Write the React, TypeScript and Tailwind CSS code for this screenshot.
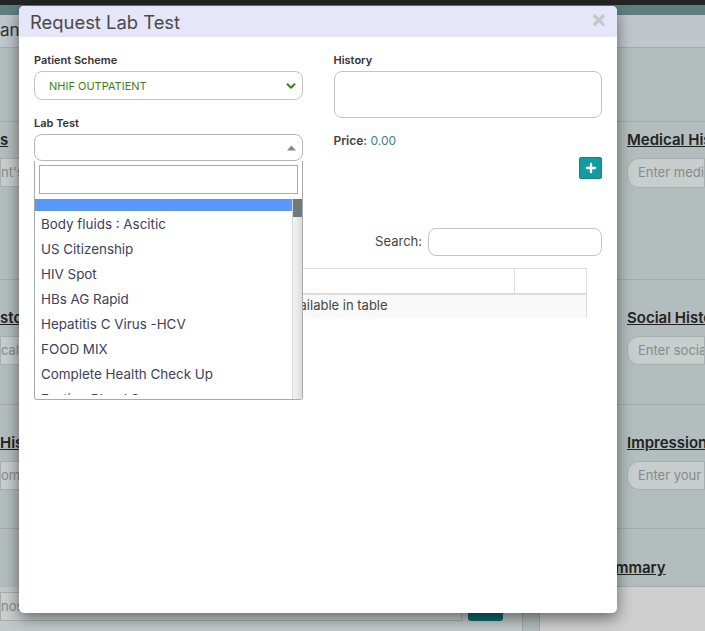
import { ChevronDown, Plus } from "lucide-react";

const labTests = [
  "Body fluids : Ascitic",
  "US Citizenship",
  "HIV Spot",
  "HBs AG Rapid",
  "Hepatitis C Virus -HCV",
  "FOOD MIX",
  "Complete Health Check Up",
  "Fasting Blood Sugar",
];

function BgHeading({ text, className = "" }: { text: string; className?: string }) {
  return (
    <p className={`text-[15px] leading-[20px] font-semibold text-[#222] underline whitespace-nowrap ${className}`}>
      {text}
    </p>
  );
}

function BgInput({ text, className = "" }: { text: string; className?: string }) {
  return (
    <div
      className={`h-[29px] bg-[#c8cdcd] border border-[#a6aeae] flex items-center text-[13px] text-[#858b8b] whitespace-nowrap overflow-hidden ${className}`}
    >
      {text}
    </div>
  );
}

// page behind the modal, only its edges show
function Page() {
  return (
    <div className="absolute inset-0 flex flex-col bg-[#b4bdbd]">
      <div className="h-[5px] bg-[#242424]" />
      <div className="h-[10px] bg-[#5f7f7f]" />
      <div className="h-[33px] bg-[#c1c6cc] border-b border-[#a3abab] flex items-center text-[17px] text-[#333]">
        ane
      </div>
      <div className="flex flex-1">
        {/* left column */}
        <div className="w-[523px] shrink-0 flex flex-col border-r border-[#a3abab]">
          <div className="h-[74px] border-b border-[#a3abab]" />
          <div className="h-[158px] border-b border-[#a3abab] pt-[8px]">
            <BgHeading text="s" />
            <BgInput text="nt's" className="mt-[8px] h-[22px] rounded-r-[10px]" />
          </div>
          <div className="h-[125px] border-b border-[#a3abab] pt-[28px]">
            <BgHeading text="stor" />
            <BgInput text="cal I" className="mt-[8px] rounded-r-[10px]" />
          </div>
          <div className="h-[124px] border-b border-[#a3abab] pt-[28px]">
            <BgHeading text="Hist" />
            <BgInput text="omi" className="mt-[8px] rounded-r-[10px]" />
          </div>
          <div className="h-[58px]" />
          <div className="flex-1 bg-[#c3c8c8] flex items-start pt-[5px] gap-[6px]">
            <BgInput text="nos" className="w-[462px] h-[26px] bg-[#cbcfcf]" />
            <div className="w-[35px] h-[31px] bg-[#0e6a6e] rounded-[3px] mt-[-2px]" />
          </div>
        </div>
        <div className="w-[17px] shrink-0 border-r border-[#a3abab]" />
        {/* right column */}
        <div className="flex-1 min-w-0 overflow-hidden flex flex-col">
          <div className="h-[74px] border-b border-[#a3abab]" />
          <div className="h-[158px] border-b border-[#a3abab] pt-[8px] pl-[87px]">
            <BgHeading text="Medical History" />
            <BgInput text="Enter medical history" className="mt-[8px] pl-[10px] rounded-l-[12px] h-[30px]" />
          </div>
          <div className="h-[125px] border-b border-[#a3abab] pt-[28px] pl-[87px]">
            <BgHeading text="Social History" />
            <BgInput text="Enter social history" className="mt-[8px] pl-[10px] rounded-l-[12px]" />
          </div>
          <div className="h-[124px] border-b border-[#a3abab] pt-[28px] pl-[87px]">
            <BgHeading text="Impressions" />
            <BgInput text="Enter your impressions" className="mt-[8px] pl-[10px] rounded-l-[12px]" />
          </div>
          <div className="h-[58px] border-b border-[#a3abab] pt-[29px] pl-[56px]">
            <BgHeading text="Summary" />
          </div>
          <div className="flex-1 bg-[#cfcfcf]" />
        </div>
      </div>
    </div>
  );
}

function LabTestSelect() {
  return (
    <div className="relative">
      <div className="h-[27px] rounded-[8px] border border-[#b5b5b5] bg-white flex items-center justify-end pr-[6px]">
        <svg width="9" height="6" viewBox="0 0 9 6">
          <path d="M0 5.5 L4.5 0.5 L9 5.5 Z" fill="#888" />
        </svg>
      </div>
      {/* open select2 dropdown */}
      <div className="absolute left-0 top-full w-full bg-white border border-t-0 border-[#aaa] rounded-b-[3px] z-10">
        <div className="px-[4px] pt-[4px]">
          <div className="h-[29px] border border-[#aaa] bg-white" />
        </div>
        <div className="mt-[5px] h-[200px] flex overflow-hidden">
          <ul className="flex-1 h-[196px] overflow-hidden text-[13.4px] text-[#40405a]">
            <li className="h-[12px] bg-[#5897fb]" />
            {labTests.map((t) => (
              <li key={t} className="h-[25px] leading-[27px] pl-[6px] whitespace-nowrap">
                {t}
              </li>
            ))}
          </ul>
          <div className="w-[10px] flex flex-col bg-gradient-to-r from-[#f4f4f4] via-[#e9e9e9] to-[#dcdcdc] border-l border-[#d6d6d6]">
            <div className="h-[18px] bg-[#6f7a78]" />
          </div>
        </div>
      </div>
    </div>
  );
}

export default function App() {
  return (
    <div className="relative w-[705px] h-[631px] overflow-hidden font-['Inter',sans-serif]">
      <Page />

      {/* modal */}
      <div className="absolute left-[19px] top-[6px] w-[598px] h-[607px] bg-white rounded-[5px] overflow-hidden shadow-[0_5px_15px_rgba(0,0,0,0.5)]">
        <div className="h-[31px] bg-[#e6e6fa] flex items-center justify-between pl-[11px] pr-[10px]">
          <h4 className="text-[18.4px] leading-[24px] mt-[1px] text-[#4a4a4a]">Request Lab Test</h4>
          <span className="self-start mt-[1px] text-[24px] leading-[24px] font-bold text-[#c6c6c6]">×</span>
        </div>

        <div className="px-[15px] pt-[16px]">
          <div className="grid grid-cols-2 gap-x-[31px] items-start">
            {/* left */}
            <div className="flex flex-col">
              <label className="text-[11px] leading-[14px] font-semibold text-[#333]">Patient Scheme</label>
              <div className="mt-[4px] h-[29px] rounded-[8px] border border-[#c4c4c4] flex items-center justify-between pl-[14px] pr-[4px] text-[11px] text-[#3f7f14]">
                <span className="mt-[2px]">NHIF OUTPATIENT</span>
                <ChevronDown size={14} strokeWidth={3.5} className="text-[#3f7f14]" />
              </div>
              <label className="mt-[16px] text-[11px] leading-[14px] font-semibold text-[#333]">Lab Test</label>
              <div className="mt-[4px]">
                <LabTestSelect />
              </div>
            </div>

            {/* right */}
            <div className="flex flex-col">
              <label className="text-[11px] leading-[14px] font-semibold text-[#333]">History</label>
              <div className="mt-[4px] h-[47px] rounded-[8px] border border-[#c4c4c4]" />
              <p className="mt-[15px] text-[12px] leading-[16px] text-[#444]">
                <span className="font-semibold">Price:</span> <span className="text-[#3a7ca5]">0.00</span>
              </p>
              <div className="mt-[8px] flex justify-end">
                <button className="w-[23px] h-[22px] bg-[#139ca0] border border-[#0f8488] rounded-[2px] flex items-center justify-center">
                  <Plus size={14} strokeWidth={4} className="text-white" />
                </button>
              </div>
            </div>
          </div>

          <div className="mt-[49px] flex items-center justify-end gap-[6px]">
            <span className="text-[13px] text-[#444]">Search:</span>
            <div className="w-[174px] h-[28px] rounded-[8px] border border-[#c4c4c4]" />
          </div>

          <table className="mt-[12px] w-[553px] border-collapse text-[13px] text-[#444]">
            <thead>
              <tr className="h-[25px] border border-[#ddd] border-b-2">
                <th className="w-[480px] border-r border-[#ddd]" />
                <th />
              </tr>
            </thead>
            <tbody>
              <tr className="h-[24px] bg-[#f9f9f9] border-x border-[#ddd]">
                <td colSpan={2} className="text-center">
                  No data available in table
                </td>
              </tr>
            </tbody>
          </table>
        </div>
      </div>
    </div>
  );
}
